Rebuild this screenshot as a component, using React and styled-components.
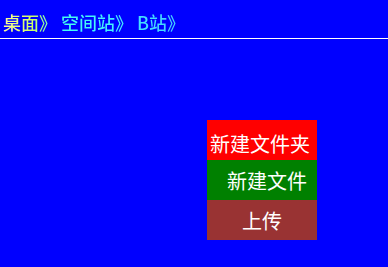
import React from "react";
import styled, { createGlobalStyle } from "styled-components";

const Global = createGlobalStyle`
  html, body {
    margin: 0;
    padding: 0;
    background: #0000ff;
    height: 100%;
  }
  body {
    font-family: "Noto Sans CJK SC", "Noto Sans", sans-serif;
  }
`;

const Page = styled.div`
  width: 388px;
  height: 267px;
  background: #0000ff;
  display: flex;
  flex-direction: column;
`;

const Header = styled.div`
  height: 39px;
  border-bottom: 1px solid #ffffff;
  display: flex;
  align-items: center;
  padding-left: 3px;
  box-sizing: border-box;
`;

const Crumbs = styled.div`
  display: flex;
  gap: 4px;
  font-size: 18px;
  font-weight: 500;
  line-height: 24px;
  margin-top: 6px;
  background: linear-gradient(to right, #ffff99 0%, #ccff66 16%, #44ffee 32%, #44f0ff 60%, #44ccff 100%);
  -webkit-background-clip: text;
  background-clip: text;
  color: transparent;
`;

const Body = styled.div`
  flex: 1;
  display: flex;
  padding: 81px 0 0 207px;
`;

const Menu = styled.div`
  width: 110px;
  display: flex;
  flex-direction: column;
`;

const Item = styled.div`
  height: 40px;
  background: ${p => p.bg};
  color: #ffffff;
  font-size: 20px;
  display: flex;
  align-items: center;
  justify-content: center;
  white-space: nowrap;
  padding-left: ${p => p.shift > 0 ? p.shift * 2 : 0}px;
  padding-right: ${p => p.shift < 0 ? -p.shift * 2 : 0}px;
  padding-top: ${p => p.down || 0}px;
  box-sizing: border-box;
`;

export default function App() {
  return (
    <Page>
      <Global />
      <Header>
        <Crumbs>
          <span>桌面》</span>
          <span>空间站》</span>
          <span>B站》</span>
        </Crumbs>
      </Header>
      <Body>
        <Menu>
          <Item bg="#ff0000" shift={-2} down={6}>新建文件夹</Item>
          <Item bg="#008000" shift={5}>新建文件</Item>
          <Item bg="#993333" shift={0}>上传</Item>
        </Menu>
      </Body>
    </Page>
  );
}
